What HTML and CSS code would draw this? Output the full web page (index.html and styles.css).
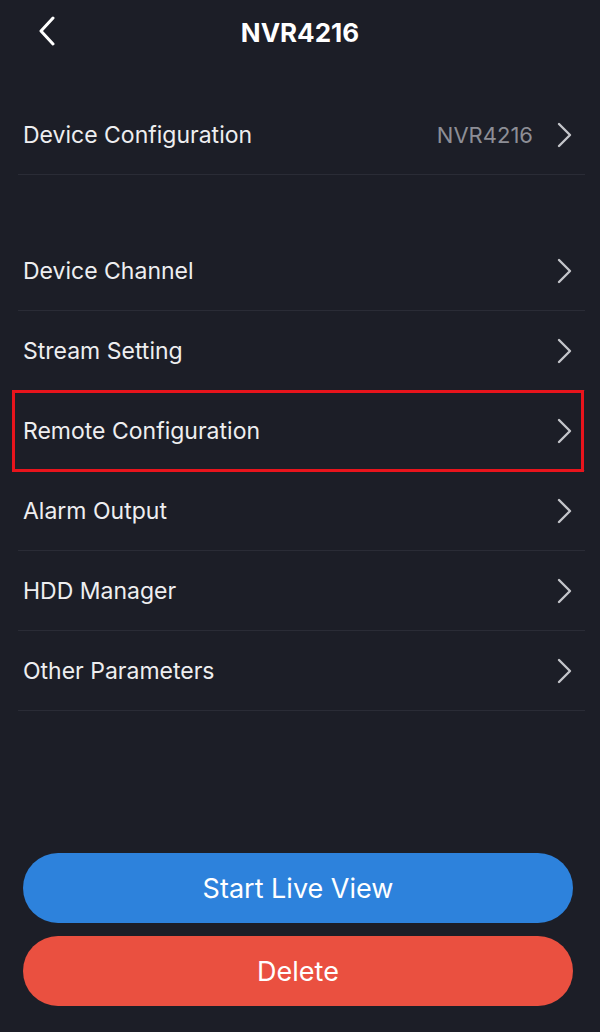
FILE: index.html
```html
<!DOCTYPE html>
<html>
<head>
<meta charset="utf-8">
<link rel="stylesheet" href="styles.css">
</head>
<body>
<div class="screen">
  <header class="topbar">
    <svg class="back" viewBox="0 0 18 30" width="18" height="30"><path d="M15 2 L3 15 L15 28" fill="none" stroke="#fff" stroke-width="3" stroke-linecap="round" stroke-linejoin="round"/></svg>
    <h1 class="title">NVR4216</h1>
  </header>

  <div class="group first">
    <div class="row"><span class="label">Device Configuration</span><span class="value">NVR4216</span><svg class="chev" viewBox="0 0 16 26" width="16" height="26"><path d="M2 2 L13 13 L2 24" fill="none" stroke="#c4c5ca" stroke-width="2.4" stroke-linecap="round" stroke-linejoin="round"/></svg></div>
  </div>

  <div class="group second">
    <div class="row"><span class="label">Device Channel</span><svg class="chev" viewBox="0 0 16 26" width="16" height="26"><path d="M2 2 L13 13 L2 24" fill="none" stroke="#c4c5ca" stroke-width="2.4" stroke-linecap="round" stroke-linejoin="round"/></svg></div>
    <div class="row"><span class="label">Stream Setting</span><svg class="chev" viewBox="0 0 16 26" width="16" height="26"><path d="M2 2 L13 13 L2 24" fill="none" stroke="#c4c5ca" stroke-width="2.4" stroke-linecap="round" stroke-linejoin="round"/></svg></div>
    <div class="row highlight"><span class="label">Remote Configuration</span><svg class="chev" viewBox="0 0 16 26" width="16" height="26"><path d="M2 2 L13 13 L2 24" fill="none" stroke="#c4c5ca" stroke-width="2.4" stroke-linecap="round" stroke-linejoin="round"/></svg></div>
    <div class="row"><span class="label">Alarm Output</span><svg class="chev" viewBox="0 0 16 26" width="16" height="26"><path d="M2 2 L13 13 L2 24" fill="none" stroke="#c4c5ca" stroke-width="2.4" stroke-linecap="round" stroke-linejoin="round"/></svg></div>
    <div class="row"><span class="label">HDD Manager</span><svg class="chev" viewBox="0 0 16 26" width="16" height="26"><path d="M2 2 L13 13 L2 24" fill="none" stroke="#c4c5ca" stroke-width="2.4" stroke-linecap="round" stroke-linejoin="round"/></svg></div>
    <div class="row"><span class="label">Other Parameters</span><svg class="chev" viewBox="0 0 16 26" width="16" height="26"><path d="M2 2 L13 13 L2 24" fill="none" stroke="#c4c5ca" stroke-width="2.4" stroke-linecap="round" stroke-linejoin="round"/></svg></div>
  </div>

  <div class="actions">
    <button class="btn btn-live">Start Live View</button>
    <button class="btn btn-delete">Delete</button>
  </div>
</div>
</body>
</html>
```

FILE: styles.css
```css
html, body {
  margin: 0;
  padding: 0;
  background: #1c1e27;
}
.screen {
  width: 600px;
  height: 1032px;
  background: #1c1e27;
  font-family: Inter, Roboto, "Liberation Sans", sans-serif;
  color: #f2f2f4;
  display: flex;
  flex-direction: column;
  overflow: hidden;
}
.topbar {
  position: relative;
  height: 65px;
  display: flex;
  align-items: center;
  justify-content: center;
}
.back {
  position: absolute;
  left: 38px;
  top: 16px;
}
.title {
  margin: 0;
  font-size: 26px;
  font-weight: 700;
  color: #ffffff;
}
.group {
  margin: 0 15px 0 18px;
}
.group.first {
  margin-top: 30px;
}
.group.second {
  margin-top: 56px;
}
.row {
  position: relative;
  height: 79px;
  border-bottom: 1px solid #2a2c36;
  display: flex;
  align-items: center;
  padding-left: 5px;
  padding-right: 12px;
}
.label {
  flex: 1;
  font-size: 23px;
  color: #eeeef0;
}
.value {
  font-size: 22px;
  color: #8d8e96;
  margin-right: 24px;
}
.chev {
  display: block;
}
.highlight::after {
  content: "";
  position: absolute;
  left: -6px;
  right: 1px;
  top: -1px;
  bottom: -2px;
  border: 3px solid #e8141c;
  pointer-events: none;
}
.actions {
  margin-top: 142px;
  padding: 0 27px 0 23px;
  display: flex;
  flex-direction: column;
  gap: 13px;
}
.btn {
  height: 70px;
  border: none;
  border-radius: 35px;
  color: #ffffff;
  font-family: Inter, Roboto, "Liberation Sans", sans-serif;
  font-size: 27px;
  padding: 0;
}
.btn-live {
  background: #2d82dc;
}
.btn-delete {
  background: #ea5040;
}
```
